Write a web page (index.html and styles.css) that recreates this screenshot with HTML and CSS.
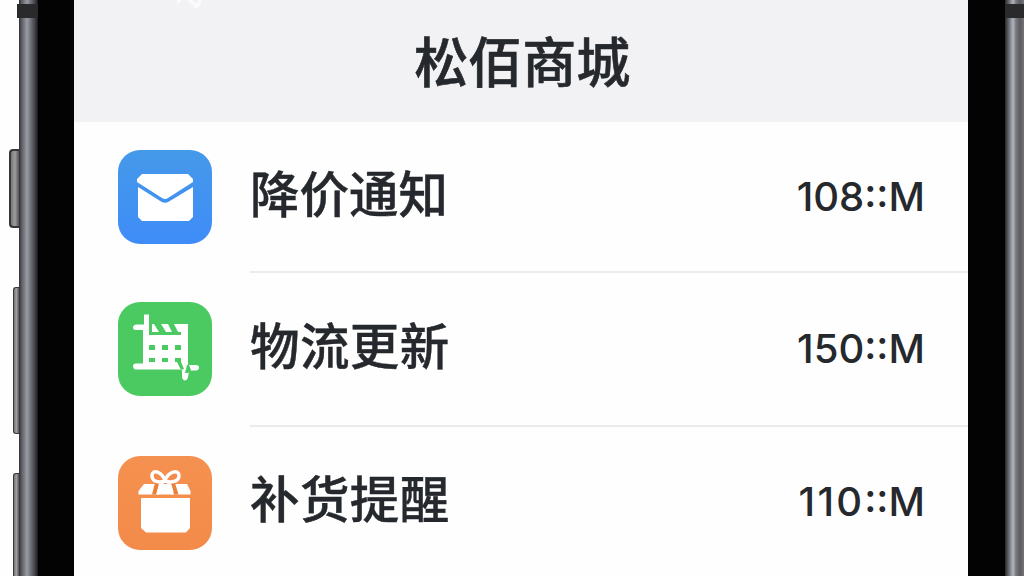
FILE: index.html
```
<!DOCTYPE html>
<html lang="zh-CN">
<head>
    <meta charset="UTF-8" />
    <meta name="viewport" content="width=device-width, initial-scale=1" />
    <title>松佰商城</title>
    <link rel="stylesheet" href="styles.css">
</head>
<body>

<div class="phone">
    <div class="side-buttons">
        <div class="side-button mute"></div>
        <div class="side-button volume"></div>
        <div class="side-button volume-down"></div>
    </div>
    <div class="rail rail-left"><div class="antenna"></div></div>
    <div class="bezel bezel-left"></div>

    <main class="screen">
        <header class="header">
            <svg class="status" viewBox="0 0 30 10" aria-hidden="true">
                <path d="M1 0h4v2l-4 2zM12 0h4l5 4 1-4h4l-2 5-3 4-4-2v-2l-5-3z" />
            </svg>
            <h1>松佰商城</h1>
        </header>

        <ul class="list">
            <li class="row">
                <svg class="icon" viewBox="0 0 94 94">
                    <defs>
                        <linearGradient id="blue" x1="0" y1="0" x2="0" y2="1">
                            <stop offset="0" stop-color="#4599e9" />
                            <stop offset="1" stop-color="#3f8cf8" />
                        </linearGradient>
                    </defs>
                    <rect width="94" height="94" rx="22" fill="url(#blue)" />
                    <path d="M24 24h46l5 5v3L50 48q-3 2-6 0L19 32v-3z" fill="#fff" />
                    <path d="M20 37l23 14.500q4 2.500 8 0L75 37v30l-4 4H24l-4-4z" fill="#fff" />
                </svg>
                <div class="content">
                    <span class="name">降价通知</span>
                    <span class="value">108::M</span>
                </div>
            </li>
            <li class="row">
                <svg class="icon" viewBox="0 0 94 94">
                    <rect width="94" height="94" rx="22" fill="#4bca61" />
                    <g fill="#fff">
                        <path d="M26 12.500h5v9.500h39v41h8q3 0 3 2.500t-3 3h-7l-1 7q-1 3-3 3t-3-3v-7l-2-1H17q-2-1-2-3.500t3-2.500h7V28h-7q-3 0-3-2.500t3-3h8z" />
                    </g>
                    <g fill="#4bca61">
                        <path d="M31 22h3v8h7l-5-8h7l5 8h6l-4-8h6l4 8h3v3H31z" />
                        <path d="M31 43h6v5h-6zM44 43h6v5h-6zM57 43h6v5h-6zM31 56h6v4h-6zM44 56h6v4h-6zM57 56h6v4l3 7-3 1-4-8h-2z" />
                        <path d="M69 63h2l2 5-3 3h-3z" />
                    </g>
                </svg>
                <div class="content">
                    <span class="name">物流更新</span>
                    <span class="value">150::M</span>
                </div>
            </li>
            <li class="row">
                <svg class="icon" viewBox="0 0 94 94">
                    <defs>
                        <linearGradient id="orange" x1="0" y1="0" x2="0" y2="1">
                            <stop offset="0" stop-color="#f59150" />
                            <stop offset="1" stop-color="#f38a49" />
                        </linearGradient>
                    </defs>
                    <rect width="94" height="94" rx="22" fill="url(#orange)" />
                    <path d="M26 28h43l3.500 7v3.500H20.500V35zM23 42h49v30l-4 4.500H28L23 72z" fill="#fff" />
                    <path d="M41 27h-4l-3 11.500h4.500zM53 27h4l3.500 11.500H55z" fill="#e9803c" />
                    <path d="M47 25C44 15 34 13 34 19.500s7 7.500 13 5.500zM47 25C50 15 61 13 61 19.500S53 27 47 25z" fill="#f28b4b" stroke="#fff" stroke-width="3.500" />
                    <path d="M45 26q-4 5-5.500 12.500M50 26q4 5 4.500 12.500" fill="none" stroke="#fff" stroke-width="2.500" />
                </svg>
                <div class="content">
                    <span class="name">补货提醒</span>
                    <span class="value"><span class="wide">110</span>::M</span>
                </div>
            </li>
        </ul>
    </main>

    <div class="bezel bezel-right"></div>
    <div class="rail rail-right"><div class="antenna"></div></div>
</div>

</body>
</html>
```
FILE: styles.css
```
* {
    box-sizing: border-box;
}
body {
    margin: 0;
    background: #fefefe;
    color: #25282c;
    font-family: Inter, "Noto Sans CJK SC", sans-serif;
    overflow: hidden;
}
.phone {
    display: flex;
    width: 1024px;
    height: 576px;
}

/* boutons et cadre du téléphone */
.side-buttons {
    width: 19px;
    display: flex;
    flex-direction: column;
    align-items: flex-end;
    padding-top: 149px;
}
.side-button {
    flex: none;
    width: 6px;
    border: 1px solid #35373b;
    border-right: 0;
    border-radius: 3px 0 0 3px;
    background: linear-gradient(90deg, #77777a, #a09c9b 50%, #515259);
}
.mute {
    width: 10px;
    height: 79px;
    border-width: 2px 0 2px 2px;
    border-radius: 4px 0 0 4px;
}
.volume {
    height: 147px;
    margin-top: 59px;
}
.volume-down {
    height: 110px;
    margin-top: 39px;
}
.rail {
    width: 19px;
    padding-top: 4px;
}
.rail-left {
    background: linear-gradient(90deg, #303238 0, #606268 3px, #76787f 5px, #9a9ca4 8px, #777980 11px, #55575d 14px, #35363b 17px, #141416 19px);
}
.rail-right {
    background: linear-gradient(90deg, #28282b 0, #5a5b60 3px, #8e9199 6px, #b3b6bf 8px, #777980 11px, #5b5b60 15px, #737378 19px);
}
.antenna {
    height: 14px;
    background: #2a2a2c;
}
.rail-left .antenna {
    margin-left: -2px;
}
.bezel {
    background: #030304;
}
.bezel-left {
    width: 35.500px;
}
.bezel-right {
    width: 37px;
}

.screen {
    flex: 1;
    background: #fefefe;
}
.header {
    height: 122px;
    background: #f2f2f4;
    display: grid;
    justify-items: center;
}
.header > * {
    grid-area: 1 / 1;
}
.status {
    width: 30px;
    height: 10px;
    justify-self: start;
    margin-left: 102px;
    fill: #fbfbfc;
}
h1 {
    margin: 24px 0 0 3px;
    font-size: 54px;
    line-height: 80px;
    font-weight: 500;
    -webkit-text-stroke: 0.6px #25282c;
}

.list {
    list-style: none;
    margin: 0;
    padding: 0;
}
.row {
    display: flex;
    height: 153.500px;
    padding-left: 44.500px;
}
.row:first-child {
    height: 151px;
}
.icon {
    width: 94px;
    height: 94px;
    margin-top: 29px;
}
.row:first-child .icon {
    margin-top: 28px;
}
.content {
    flex: 1;
    display: flex;
    justify-content: space-between;
    align-items: center;
    margin-left: 38px;
    padding-right: 43px;
    border-bottom: 2px solid #ebebec;
}
.row:last-child .content {
    border-bottom: 0;
    padding-bottom: 3px;
}
.name {
    margin-top: -3px;
    font-size: 49.500px;
    line-height: 72px;
    font-weight: 500;
    -webkit-text-stroke: 0.4px #25282c;
}
.row + .row .name {
    letter-spacing: 0.4px;
}
.value {
    font-size: 40px;
    line-height: 50px;
    font-weight: 450;
}
.wide {
    letter-spacing: 2.200px;
}
```
